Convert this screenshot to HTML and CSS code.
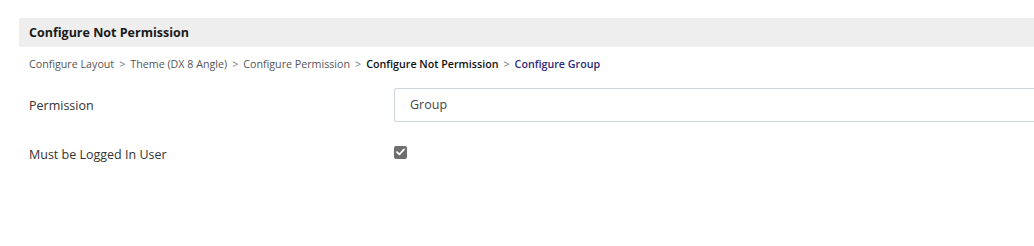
FILE: index.html
```html
<!DOCTYPE html>
<html>
<head>
<meta charset="utf-8">
<link rel="stylesheet" href="styles.css">
</head>
<body>
<div class="page">
  <div class="header">Configure Not Permission</div>
  <div class="crumbs">
    <span>Configure Layout</span><span class="sep">&gt;</span>
    <span>Theme (DX 8 Angle)</span><span class="sep">&gt;</span>
    <span>Configure Permission</span><span class="sep">&gt;</span>
    <span class="current">Configure Not Permission</span><span class="sep">&gt;</span>
    <span class="link">Configure Group</span>
  </div>
  <div class="row first-row">
    <div class="label">Permission</div>
    <div class="field"><div class="input">Group</div></div>
  </div>
  <div class="row check-row">
    <div class="label">Must be Logged In User</div>
    <div class="field">
      <span class="checkbox"><svg width="9" height="8" viewBox="0 0 9 8"><path d="M1 4.2 L3.4 6.4 L8 1.4" fill="none" stroke="#fff" stroke-width="1.8" stroke-linecap="round" stroke-linejoin="round"/></svg></span>
    </div>
  </div>
</div>
</body>
</html>
```
FILE: styles.css
```css
html, body {
  margin: 0;
  padding: 0;
  background: #fff;
}
body {
  font-family: "Open Sans", "Noto Sans", sans-serif;
  color: #333;
}
.page {
  padding: 18px 0 0 19px;
}
.header {
  background: #eeeeee;
  height: 29px;
  line-height: 29px;
  padding-left: 10px;
  font-size: 12.5px;
  font-weight: 700;
  color: #1a1a1a;
}
.crumbs {
  padding: 8px 0 0 10px;
  font-size: 10.7px;
  color: #555;
  height: 18px;
  line-height: 18px;
  display: flex;
  gap: 4px;
}
.crumbs .sep {
  color: #777;
  padding: 0 1px;
}
.crumbs .current {
  color: #111;
  font-weight: 600;
}
.crumbs .link {
  color: #2d2a78;
  font-weight: 600;
}
.row {
  display: flex;
  align-items: center;
}
.label {
  width: 365px;
  flex: none;
  padding-left: 10px;
  font-size: 12.5px;
  color: #333;
}
.field {
  flex: 1;
}
.input {
  height: 32px;
  border: 1px solid #cfd4da;
  border-right: none;
  border-radius: 3px 0 0 3px;
  padding-left: 15px;
  line-height: 32px;
  font-size: 12.5px;
  color: #444;
}
.first-row {
  margin-top: 15px;
}
.check-row {
  margin-top: 15px;
  height: 34px;
}
.checkbox {
  display: inline-flex;
  align-items: center;
  justify-content: center;
  width: 13px;
  height: 13px;
  background: #6f6f6f;
  border-radius: 2px;
  position: relative;
  top: -4px;
}
```
